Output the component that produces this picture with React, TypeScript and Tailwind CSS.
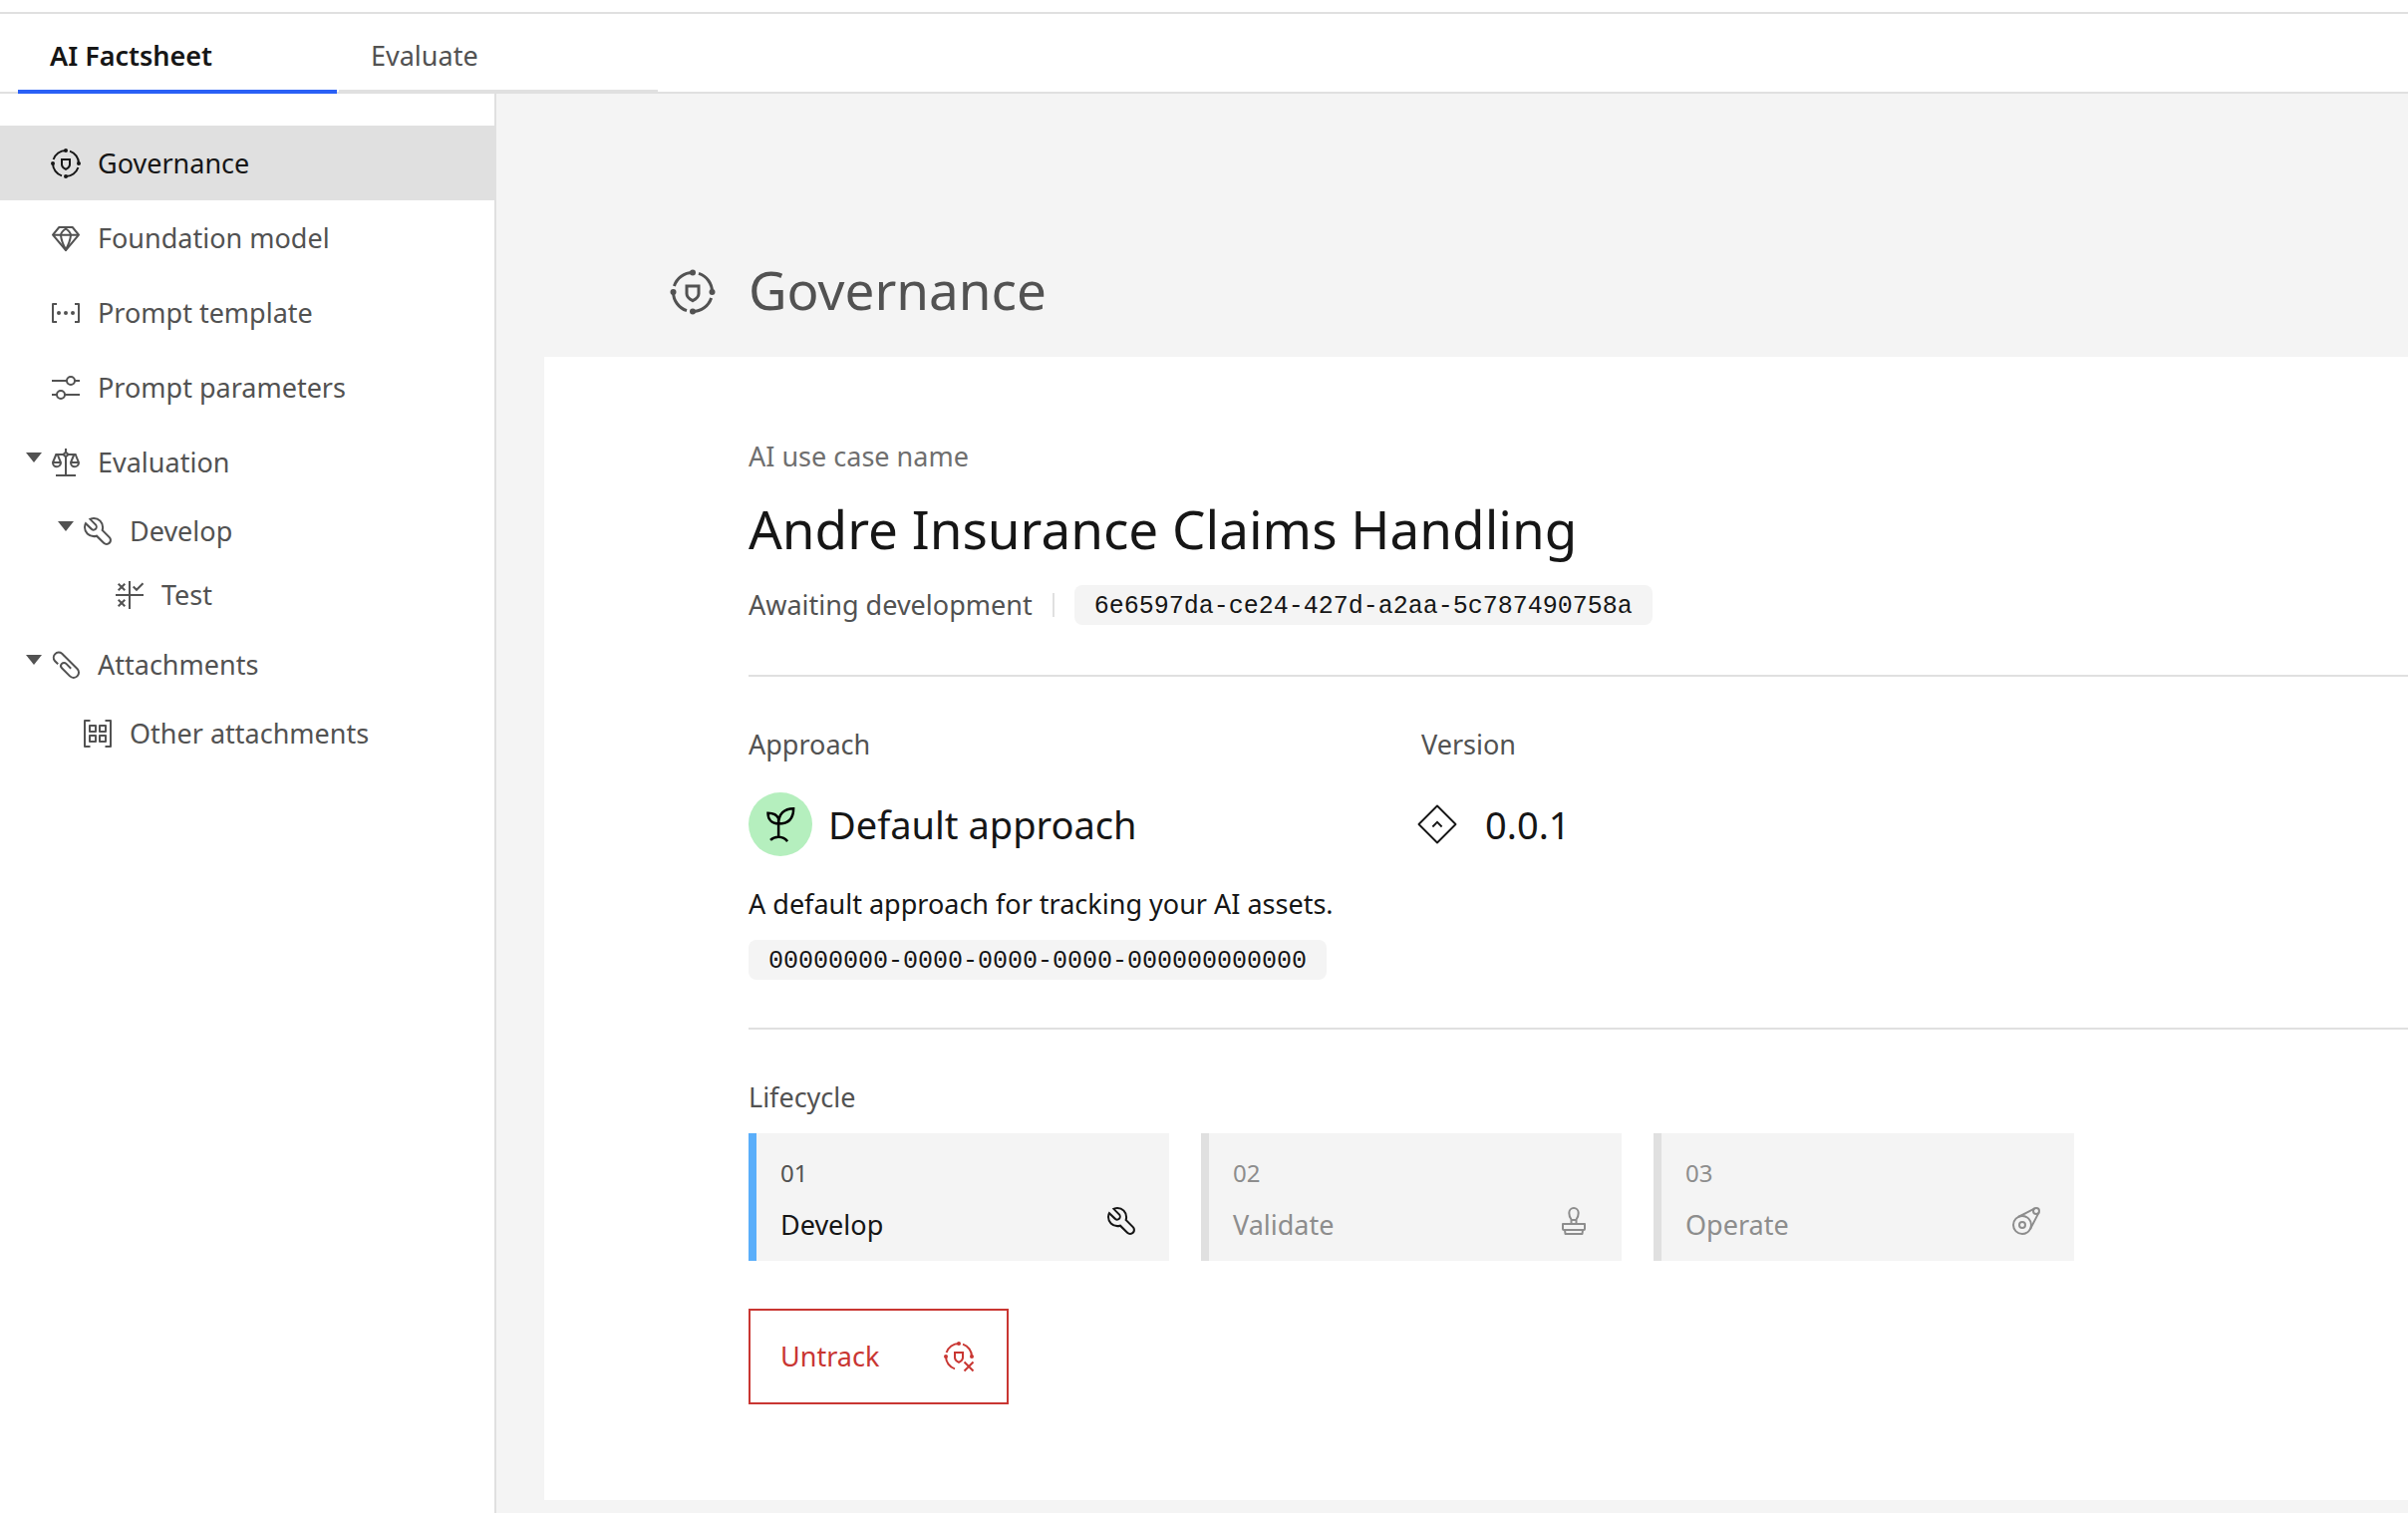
import React from "react";

type IconProps = { className?: string };

function Glyph({ className = "size-8", children }: IconProps & { children: React.ReactNode }) {
  return (
    <svg
      viewBox="0 0 32 32"
      fill="none"
      stroke="currentColor"
      strokeWidth={2}
      aria-hidden="true"
      className={`shrink-0 ${className}`}
    >
      {children}
    </svg>
  );
}

const SHIELD = "M12 12h8v5.2c0 1.900-1.200 3.200-4 4.600c-2.800-1.400-4-2.700-4-4.600z";

function GovernanceIcon({ className }: IconProps) {
  return (
    <Glyph className={className}>
      <path d="M3.600 12A13 13 0 0 1 16 3M20 3.600A13 13 0 0 1 29 16M28.400 20A13 13 0 0 1 16 29M12 28.400A13 13 0 0 1 3 16" />
      <path d={SHIELD} />
      <g fill="currentColor" stroke="none">
        <circle cx="16" cy="3" r="2" />
        <circle cx="29" cy="16" r="2" />
        <circle cx="16" cy="29" r="2" />
        <circle cx="3" cy="16" r="2" />
      </g>
    </Glyph>
  );
}

function UntrackIcon() {
  return (
    <Glyph>
      <path d="M3.600 12A13 13 0 0 1 16 3M20 3.600A13 13 0 0 1 29 16M12 28.400A13 13 0 0 1 3 16" />
      <path d={SHIELD} />
      <path d="M21.500 21.500l9 9M30.500 21.500l-9 9" />
      <g fill="currentColor" stroke="none">
        <circle cx="16" cy="3" r="2" />
        <circle cx="29" cy="16" r="2" />
        <circle cx="3" cy="16" r="2" />
      </g>
    </Glyph>
  );
}

function GemIcon() {
  return (
    <Glyph>
      <path strokeLinejoin="round" d="M9.300 5h13.400L29 12.700L16 28L3 12.700zM3 12.700h26" />
      <path d="M16 6.500C13 8.500 11 11 11 13.200C11.500 18 13.500 23 16 27.500C18.500 23 20.500 18 21 13.200C21 11 19 8.500 16 6.500z" />
    </Glyph>
  );
}

function TemplateIcon() {
  return (
    <Glyph>
      <path strokeLinejoin="round" d="M7 7H3v18h4M25 7h4v18h-4" />
      <g fill="currentColor" stroke="none">
        <circle cx="9" cy="16" r="2" />
        <circle cx="16" cy="16" r="2" />
        <circle cx="23" cy="16" r="2" />
      </g>
    </Glyph>
  );
}

function ParametersIcon() {
  return (
    <Glyph>
      <path d="M2 9h15M25 9h5M2 23h5M15 23h15" />
      <circle cx="21" cy="9" r="4" />
      <circle cx="11" cy="23" r="4" />
    </Glyph>
  );
}

function ScalesIcon() {
  return (
    <Glyph>
      <path d="M16 2v4M16 10v19M6 29h20M5.500 8H14M18 8h8.500" />
      <circle cx="16" cy="8" r="1.800" />
      <path d="M6.300 8L3 16a4 4.200 0 0 0 8 .200L7.700 8M3 16h8M24.300 8L21 16a4 4.200 0 0 0 8 .200L25.700 8M21 16h8" />
    </Glyph>
  );
}

function WrenchIcon() {
  return (
    <svg viewBox="0 0 32 32" fill="currentColor" aria-hidden="true" className="size-8 shrink-0">
      <path d="M12.100 2a9.800 9.800 0 0 0-5.400 1.600l6.400 6.400a2.100 2.100 0 0 1 .2 3 2.100 2.100 0 0 1-3-.2L3.700 6.400A9.840 9.840 0 0 0 2 12.100 10.140 10.140 0 0 0 12.100 22.200a10.900 10.900 0 0 0 2.600-.3l6.700 6.700a5 5 0 0 0 7.100-7.100l-6.700-6.700a10.900 10.900 0 0 0 .3-2.600A10 10 0 0 0 12.100 2Zm8 10.100a7.610 7.610 0 0 1-.3 2.100l-.3 1.100.8.8 6.700 6.700a2.880 2.880 0 0 1 .9 2.100A2.720 2.720 0 0 1 27 27a2.900 2.900 0 0 1-4.200 0l-6.700-6.700-.8-.8-1.100.3a7.610 7.610 0 0 1-2.100.3 8.270 8.270 0 0 1-5.700-2.300A7.630 7.630 0 0 1 4 12.100a8.330 8.330 0 0 1 .3-2.200l4.400 4.400a4.140 4.140 0 0 0 5.900.2 4.140 4.140 0 0 0-.2-5.900L10 4.200a6.450 6.450 0 0 1 2-.3 8.270 8.270 0 0 1 5.700 2.300 8.490 8.490 0 0 1 2.400 5.900Z" />
    </svg>
  );
}

function TestIcon() {
  return (
    <Glyph>
      <path d="M16 2v28M2 16h28M4.700 4.700l6.600 6.600M11.300 4.700l-6.600 6.600M4.700 20.700l6.600 6.600M11.300 20.700l-6.600 6.600M19.700 7.500l3.300 3.300l6.500-6.500" />
    </Glyph>
  );
}

function AttachmentIcon() {
  return (
    <Glyph>
      <path d="M8.200 15.300L4.900 12A5.200 5.200 0 0 1 12.200 4.700L27.500 20A5.200 5.200 0 0 1 20.100 27.400L12 19.300A3 3 0 0 1 16.400 14.900L21.200 19.700" />
    </Glyph>
  );
}

function OtherAttachmentsIcon() {
  return (
    <Glyph>
      <path strokeLinejoin="round" d="M8.500 3H3v26h5.500M23.500 3H29v26h-5.500" />
      <path strokeLinejoin="round" d="M8 8h6v6H8zM18 8h6v6h-6zM8 18h6v6H8zM18 18h6v6h-6z" />
    </Glyph>
  );
}

function StampIcon() {
  return (
    <Glyph>
      <path strokeLinejoin="round" d="M5 19h22v5a1 1 0 0 1-1 1H6a1 1 0 0 1-1-1zM7 25h18l-.500 4h-17z" />
      <path d="M13.500 19v-4.500C12 12.500 11.300 10 11.300 8C11.300 5 13.500 3 16 3S20.700 5 20.700 8C20.700 10 20 12.500 18.500 14.500V19M13.500 15h5" />
    </Glyph>
  );
}

function OperateIcon() {
  return (
    <Glyph>
      <circle cx="12" cy="20" r="9" />
      <circle cx="12" cy="20" r="3" />
      <circle cx="26" cy="6" r="3" />
      <path d="M7.900 12L24.600 3.300M20 24.100L28.700 7.400" />
    </Glyph>
  );
}

function SproutIcon() {
  return (
    <Glyph className="size-10">
      <path d="M14.500 9.500V26M14.500 15.500C14.500 8 19 3.300 26.500 3.300C26.500 11 22.500 15.500 14.500 15.500M14.500 15.500C9 15.500 6 12 6 7C10.500 7 13.300 8.500 14.500 11.500M8 28.700C11.500 25.200 18 25.200 21.700 29.700" />
    </Glyph>
  );
}

function VersionIcon() {
  return (
    <Glyph className="size-10">
      <path strokeWidth={1.500} strokeLinejoin="round" d="M16 1.200L30.800 16L16 30.800L1.200 16z" />
      <path strokeWidth={1.500} d="M12.300 18L16 14.300L19.700 18" />
    </Glyph>
  );
}

function Caret() {
  return (
    <svg viewBox="0 0 32 32" fill="currentColor" aria-hidden="true" className="size-8">
      <path d="M8 6h16l-8 10z" />
    </svg>
  );
}

type NavItem = {
  label: string;
  icon: React.ReactNode;
  indent: string;
  expanded?: boolean;
  active?: boolean;
};

const TOP = "h-[75px] pl-[18px]";
const SECOND = "h-16 pl-[50px]";
const THIRD = "h-16 pl-[82px]";

const NAV: NavItem[] = [
  { label: "Governance", icon: <GovernanceIcon />, indent: TOP, active: true },
  { label: "Foundation model", icon: <GemIcon />, indent: TOP },
  { label: "Prompt template", icon: <TemplateIcon />, indent: TOP },
  { label: "Prompt parameters", icon: <ParametersIcon />, indent: TOP },
  { label: "Evaluation", icon: <ScalesIcon />, indent: TOP, expanded: true },
  { label: "Develop", icon: <WrenchIcon />, indent: SECOND, expanded: true },
  { label: "Test", icon: <TestIcon />, indent: THIRD },
  { label: "Attachments", icon: <AttachmentIcon />, indent: TOP, expanded: true },
  { label: "Other attachments", icon: <OtherAttachmentsIcon />, indent: SECOND },
];

function Sidebar() {
  return (
    <nav aria-label="Factsheet sections" className="w-[498px] shrink-0 border-r-2 border-[#e0e0e0] bg-white pt-8">
      <ul>
        {NAV.map((item) => (
          <li key={item.label}>
            <button
              type="button"
              aria-current={item.active ? "page" : undefined}
              aria-expanded={item.expanded}
              className={`flex w-full items-center text-left ${item.indent} ${
                item.active ? "bg-[#e0e0e0] text-[#161616]" : "text-[#525252]"
              }`}
            >
              <span className="w-8 shrink-0">{item.expanded && <Caret />}</span>
              {item.icon}
              <span className="ml-4">{item.label}</span>
            </button>
          </li>
        ))}
      </ul>
    </nav>
  );
}

function IdTag({ children }: { children: string }) {
  return (
    <code className="flex h-10 w-fit items-center rounded-lg bg-[#f4f4f4] px-5 pt-1 font-['Liberation_Mono',monospace] text-[25px] text-[#161616]">
      {children}
    </code>
  );
}

type Stage = { number: string; name: string; icon: React.ReactNode; current?: boolean };

const STAGES: Stage[] = [
  { number: "01", name: "Develop", icon: <WrenchIcon />, current: true },
  { number: "02", name: "Validate", icon: <StampIcon /> },
  { number: "03", name: "Operate", icon: <OperateIcon /> },
];

function StageCard({ number, name, icon, current }: Stage) {
  return (
    <li
      aria-current={current ? "step" : undefined}
      className={`flex h-32 w-[422px] items-end justify-between border-l-8 bg-[#f4f4f4] pl-6 pr-8 ${
        current ? "border-[#5aaefa] text-[#161616]" : "border-[#e0e0e0] text-[#8d8d8d]"
      }`}
    >
      <div className="pb-4">
        <p className={`text-[24px] leading-8 ${current ? "text-[#525252]" : ""}`}>{number}</p>
        <p className="mt-4 leading-10">{name}</p>
      </div>
      <div className="pb-6">{icon}</div>
    </li>
  );
}

export default function App() {
  return (
    <div className="flex min-h-screen flex-col bg-white pt-3 font-['Noto_Sans',sans-serif] text-[27px] leading-10 text-[#161616]">
      <header className="border-t-2 border-[#e0e0e0]">
        <div role="tablist" className="flex h-20 gap-[2px] pl-[18px] shadow-[inset_0_-2px_0_#e0e0e0]">
          <button
            type="button"
            role="tab"
            aria-selected="true"
            className="w-80 border-b-4 border-[#2a60f6] pt-2 pl-8 text-left font-semibold"
          >
            AI Factsheet
          </button>
          <button
            type="button"
            role="tab"
            aria-selected="false"
            className="w-80 border-b-4 border-[#e0e0e0] pt-2 pl-8 text-left text-[#525252]"
          >
            Evaluate
          </button>
        </div>
      </header>

      <div className="flex grow">
        <Sidebar />

        <main className="min-w-0 grow bg-[#f4f4f4] pt-[162px] pl-12">
          <div className="flex items-center gap-8 pb-8 pl-[125px] text-[#525252]">
            <div className="pt-1">
              <GovernanceIcon className="size-12" />
            </div>
            <h1 className="text-[53px] leading-[70px]">Governance</h1>
          </div>

          <section className="bg-white pt-20 pb-24 pl-[205px]">
            <div className="border-b-2 border-[#e0e0e0] pb-[50px]">
              <p className="text-[#6f6f6f]">AI use case name</p>
              <h2 className="mt-5 text-[53px] leading-[65px]">Andre Insurance Claims Handling</h2>
              <div className="mt-6 flex items-center">
                <span className="text-[#525252]">Awaiting development</span>
                <span className="mx-5 h-6 w-[2px] bg-[#e0e0e0]" />
                <IdTag>6e6597da-ce24-427d-a2aa-5c787490758a</IdTag>
              </div>
            </div>

            <div className="flex border-b-2 border-[#e0e0e0] py-12">
              <div className="w-[675px]">
                <p className="text-[#525252]">Approach</p>
                <div className="mt-7 flex items-center gap-4">
                  <span className="flex size-16 items-center justify-center rounded-full bg-[#b5efbe] text-black">
                    <SproutIcon />
                  </span>
                  <h3 className="text-[38px] leading-[64px]">Default approach</h3>
                </div>
                <p className="mt-7 mb-4">A default approach for tracking your AI assets.</p>
                <IdTag>00000000-0000-0000-0000-000000000000</IdTag>
              </div>
              <div>
                <p className="text-[#525252]">Version</p>
                <div className="mt-7 -ml-1 flex items-center gap-7">
                  <VersionIcon />
                  <span className="text-[38px] leading-[64px]">0.0.1</span>
                </div>
              </div>
            </div>

            <div className="pt-12">
              <p className="text-[#525252]">Lifecycle</p>
              <ol className="mt-4 flex flex-wrap gap-8">
                {STAGES.map((stage) => (
                  <StageCard key={stage.number} {...stage} />
                ))}
              </ol>
              <button
                type="button"
                className="mt-12 flex h-24 items-center gap-16 border-2 border-[#c93632] pr-8 pl-[30px] text-[#c93632]"
              >
                Untrack
                <UntrackIcon />
              </button>
            </div>
          </section>
        </main>
      </div>
    </div>
  );
}
